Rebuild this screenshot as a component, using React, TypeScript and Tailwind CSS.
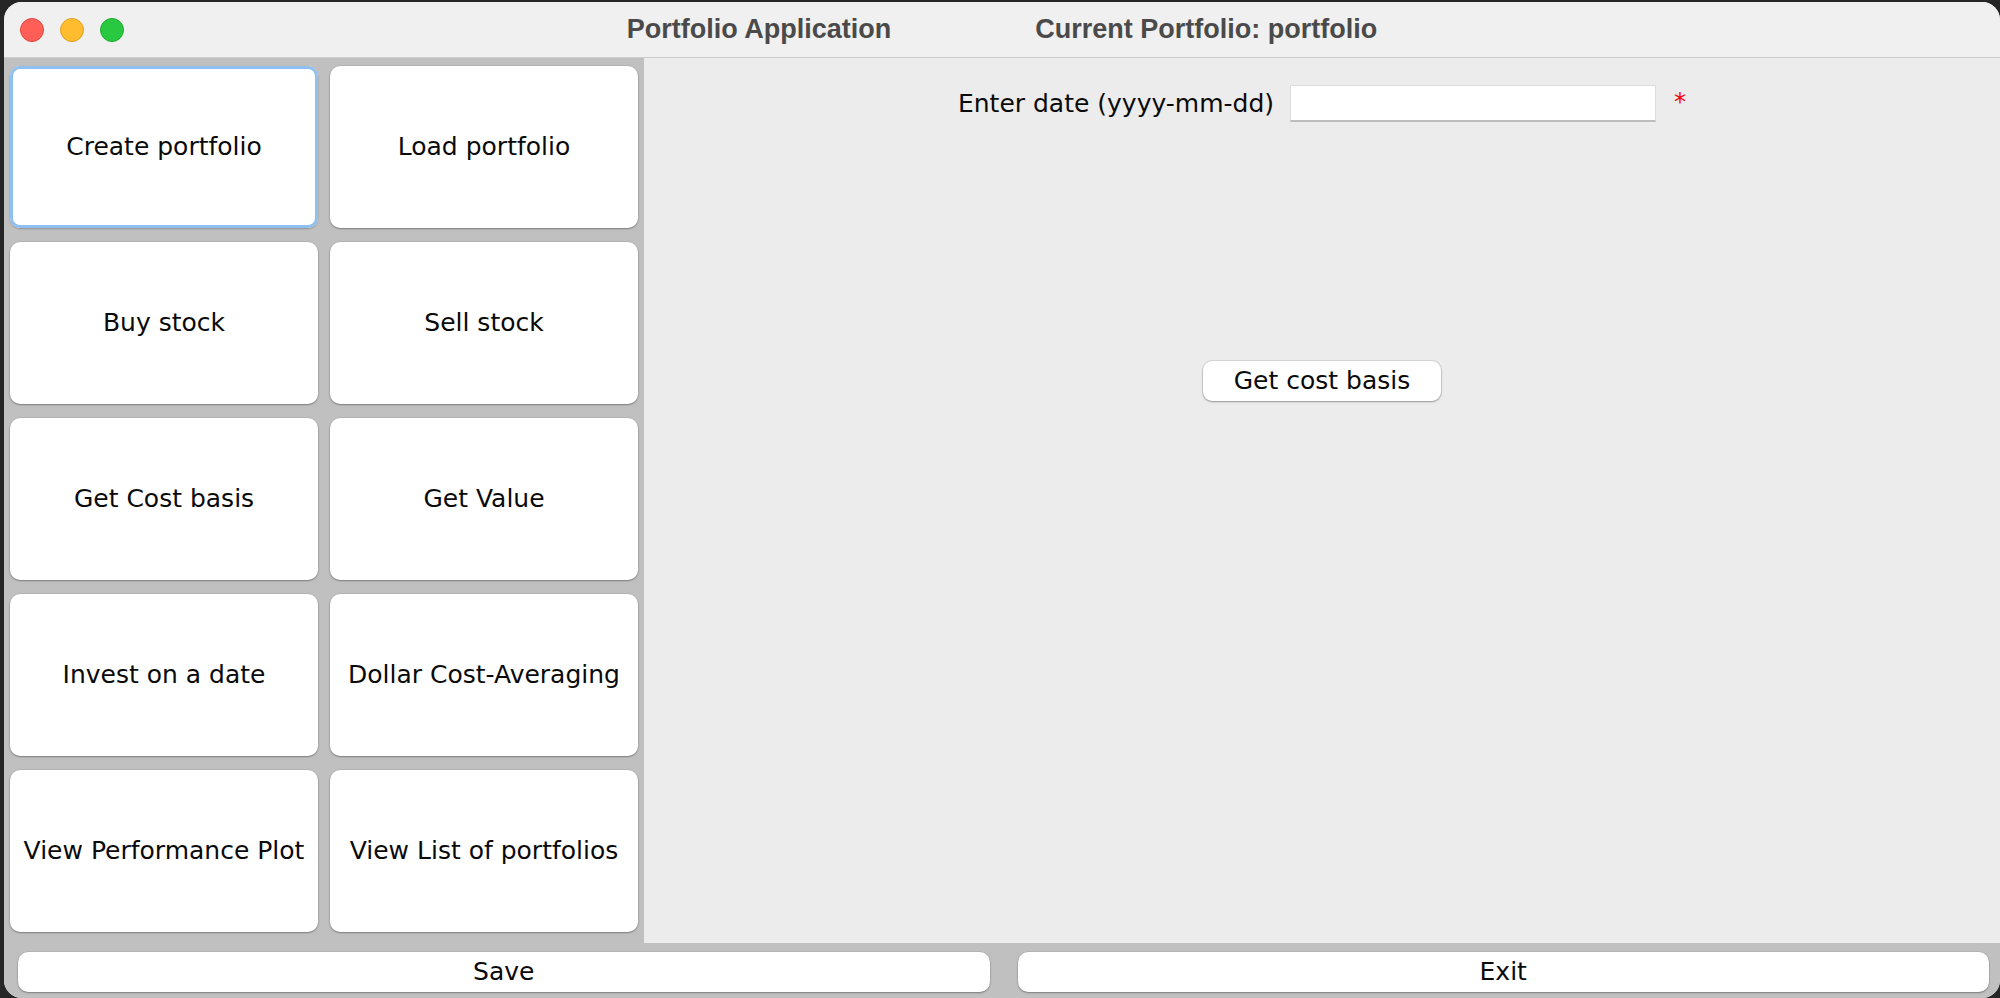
import React from "react";

const btnFont = { fontFamily: '"DejaVu Sans", "Liberation Sans", sans-serif' };

function GridButton({ label, focused }: { label: string; focused?: boolean }) {
  return (
    <button
      style={btnFont}
      className={
        "flex items-center justify-center rounded-[10px] bg-white text-[25px] text-[#0a0a0a] " +
        (focused
          ? "shadow-[inset_0_0_0_3px_#8fc0f2,0_1px_2px_rgba(0,0,0,0.25)]"
          : "shadow-[0_0_0_0.5px_rgba(0,0,0,0.10),0_1px_2px_rgba(0,0,0,0.32)]")
      }
    >
      {label}
    </button>
  );
}

export default function App() {
  const labels = [
    "Create portfolio",
    "Load portfolio",
    "Buy stock",
    "Sell stock",
    "Get Cost basis",
    "Get Value",
    "Invest on a date",
    "Dollar Cost-Averaging",
    "View Performance Plot",
    "View List of portfolios",
  ];
  return (
    <div className="w-[2000px] h-[998px] bg-[#262626] overflow-hidden flex pt-[2px] pl-[4px]">
      <div className="flex-1 h-[996px] flex flex-col rounded-[18px] overflow-hidden bg-[#ececec]">
        {/* Title bar */}
        <div className="h-[56px] shrink-0 grid grid-cols-[1fr_auto_1fr] items-center bg-[#f0f0f0] border-b border-[#cdcdcd]">
          <div className="flex items-center gap-[16px] pl-[16px]">
            <span className="w-[24px] h-[24px] rounded-full bg-[#ff5f57] border border-[#e2463f]" />
            <span className="w-[24px] h-[24px] rounded-full bg-[#febc2e] border border-[#dfa023]" />
            <span className="w-[24px] h-[24px] rounded-full bg-[#28c840] border border-[#1dad2b]" />
          </div>
          <div
            className="flex items-center gap-[144px] text-[27px] font-bold text-[#4a4a4a] leading-none"
            style={{ fontFamily: '"Liberation Sans", Arial, sans-serif' }}
          >
            <span>Portfolio Application</span>
            <span>Current Portfolio: portfolio</span>
          </div>
          <div />
        </div>

        {/* Body */}
        <div className="h-[885px] shrink-0 flex">
          <div className="w-[640px] shrink-0 bg-[#c0c0c0] pt-[8px] pl-[6px] pr-[6px] grid grid-cols-[308px_308px] gap-x-[12px] gap-y-[14px] auto-rows-[162px] content-start">
            {labels.map((l, i) => (
              <GridButton key={l} label={l} focused={i === 0} />
            ))}
          </div>
          <div className="flex-1 bg-[#ececec] flex flex-col items-center pt-[27px]" style={btnFont}>
            <div className="h-[37px] flex items-center">
              <span className="text-[25px] text-[#0a0a0a] leading-none">Enter date (yyyy-mm-dd)</span>
              <div className="ml-[16px] w-[366px] h-[37px] bg-white border border-[#dcdcdc] border-b-2 border-b-[#bdbdbd]" />
              <span className="ml-[18px] text-[24px] text-[#ff0000] leading-none -mt-[4px]">*</span>
            </div>
            <button className="mt-[239px] w-[238px] h-[40px] rounded-[9px] bg-white text-[25px] text-[#0a0a0a] flex items-center justify-center shadow-[0_0_0_1px_rgba(0,0,0,0.09),0_1px_2px_rgba(0,0,0,0.3)]">
              Get cost basis
            </button>
          </div>
        </div>

        {/* Bottom bar */}
        <div className="h-[55px] shrink-0 bg-[#c0c0c0] grid grid-cols-2 gap-[28px] pl-[14px] pr-[11px] pt-[9px]" style={btnFont}>
          <button className="h-[40px] rounded-[10px] bg-white text-[25px] text-[#0a0a0a] flex items-center justify-center shadow-[0_0_0_0.5px_rgba(0,0,0,0.1),0_1px_2px_rgba(0,0,0,0.32)]">
            Save
          </button>
          <button className="h-[40px] rounded-[10px] bg-white text-[25px] text-[#0a0a0a] flex items-center justify-center shadow-[0_0_0_0.5px_rgba(0,0,0,0.1),0_1px_2px_rgba(0,0,0,0.32)]">
            Exit
          </button>
        </div>
      </div>
    </div>
  );
}
